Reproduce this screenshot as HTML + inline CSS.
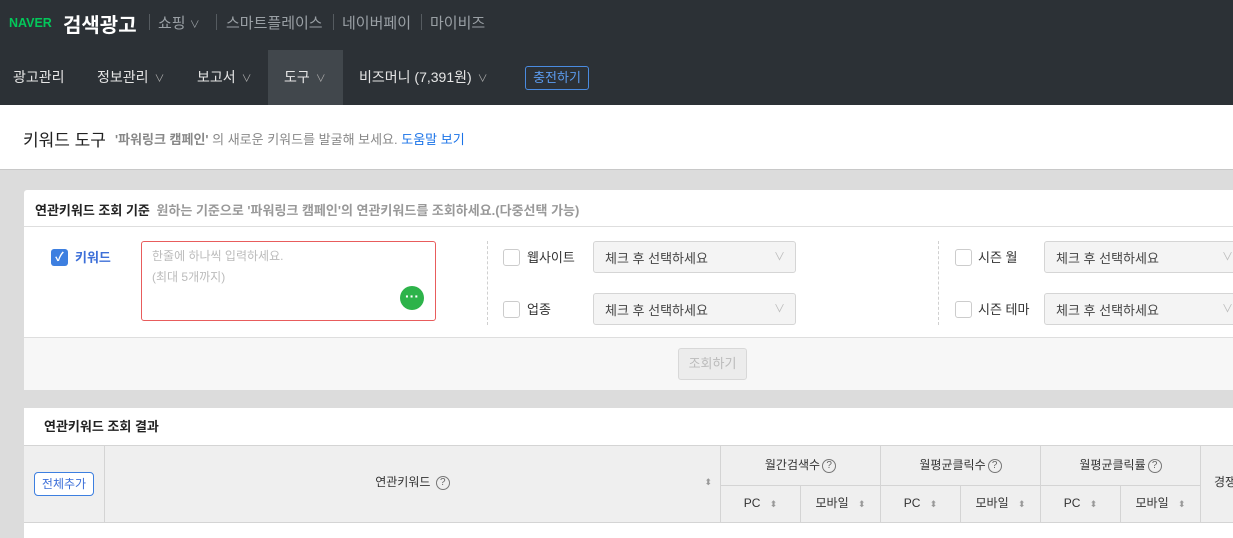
<!DOCTYPE html>
<html><head><meta charset="utf-8"><style>
*{margin:0;padding:0;box-sizing:border-box}
body{width:1233px;height:538px;overflow:hidden;background:#dcdcdc;font-family:"Liberation Sans","Noto Sans CJK KR",sans-serif;position:relative;font-size:13px;color:#333}
.a{position:absolute;white-space:nowrap}
.top{position:absolute;left:0;top:0;width:1233px;height:105px;background:#2c3136}
.g{color:#9aa0a5;font-size:15px}
.sep{position:absolute;width:1px;height:16px;background:#555b60;top:14px}
.nav{color:#e6e6e6;font-size:14px;top:67px}
.car{font-size:10px;color:#aaa;margin-left:6px}
.cb{position:absolute;width:17px;height:17px;border:1px solid #ccc;border-radius:3px;background:#fff}
.sel{position:absolute;height:32px;border:1px solid #d5d5d5;border-radius:3px;background:#f4f4f4;font-size:13px;color:#444;padding:6px 11px}
.sel:after{content:"∨";position:absolute;right:10px;top:6px;color:#bbb;font-size:11px}
.th{position:absolute;background:#efefef;border-right:1px solid #d4d4d4;border-bottom:1px solid #d4d4d4;font-size:12px;color:#333;text-align:center}
.q{display:inline-block;width:14px;height:14px;border:1px solid #777;border-radius:50%;font-size:10px;line-height:12px;text-align:center;color:#666;vertical-align:middle;margin-left:2px}
.s{color:#999;font-size:9px;margin-left:6px}
</style></head><body>
<div class="top"></div>
<div class="a" style="left:9px;top:16px;color:#03c75a;font-weight:bold;font-size:12.5px">NAVER</div>
<div class="a" style="left:63px;top:9px;color:#fff;font-size:20px;font-weight:bold">검색광고</div>
<div class="sep" style="left:149px"></div>
<div class="a g" style="left:158px;top:12px">쇼핑 <span style="font-size:10px">∨</span></div>
<div class="sep" style="left:216px"></div>
<div class="a g" style="left:226px;top:12px">스마트플레이스</div>
<div class="sep" style="left:333px"></div>
<div class="a g" style="left:342px;top:12px">네이버페이</div>
<div class="sep" style="left:421px"></div>
<div class="a g" style="left:430px;top:12px">마이비즈</div>
<div class="a" style="left:268px;top:50px;width:75px;height:55px;background:#41474c"></div>
<div class="a nav" style="left:13px">광고관리</div>
<div class="a nav" style="left:97px">정보관리<span class="car">∨</span></div>
<div class="a nav" style="left:197px">보고서<span class="car">∨</span></div>
<div class="a nav" style="left:284px">도구<span class="car">∨</span></div>
<div class="a nav" style="left:359px">비즈머니 (7,391원)<span class="car">∨</span></div>
<div class="a" style="left:525px;top:66px;width:64px;height:24px;border:1px solid #4a8be0;border-radius:3px;color:#5c9cf0;font-size:13px;text-align:center;line-height:22px">충전하기</div>

<div class="a" style="left:0;top:105px;width:1233px;height:65px;background:#fff;border-bottom:1px solid #c8c8c8"></div>
<div class="a" style="left:23px;top:126px;font-size:17px;color:#222">키워드 도구</div>
<div class="a" style="left:115px;top:129px;font-size:13px;color:#888"><b>'파워링크 캠페인'</b> 의 새로운 키워드를 발굴해 보세요. <span style="color:#1a73e8">도움말 보기</span></div>

<div class="a" style="left:24px;top:190px;width:1209px;height:200px;background:#fff;border-radius:3px 0 0 3px"></div>
<div class="a" style="left:24px;top:226px;width:1209px;height:1px;background:#dedede"></div>
<div class="a" style="left:35px;top:200px;font-size:13px;font-weight:bold;color:#222">연관키워드 조회 기준 <span style="color:#999;margin-left:3px">원하는 기준으로 '파워링크 캠페인'의 연관키워드를 조회하세요.(다중선택 가능)</span></div>
<div class="a" style="left:51px;top:249px;width:17px;height:17px;background:#3d7fe0;border-radius:3px;color:#fff;font-size:12px;text-align:center;line-height:17px;font-weight:bold">✓</div>
<div class="a" style="left:75px;top:247px;color:#3d6fd8;font-weight:bold;font-size:13px">키워드</div>
<div class="a" style="left:141px;top:241px;width:295px;height:80px;border:1px solid #e85c5c;border-radius:3px"></div>
<div class="a" style="left:152px;top:246px;color:#bbb;font-size:12px;line-height:21px">한줄에 하나씩 입력하세요.<br>(최대 5개까지)</div>
<div class="a" style="left:400px;top:286px;width:24px;height:24px;border-radius:50%;background:#2db34a;color:#fff;text-align:center;line-height:20px;font-size:14px;font-weight:bold">···</div>
<div class="a" style="left:487px;top:241px;height:84px;border-left:1px dashed #d0d0d0"></div>
<div class="a" style="left:938px;top:241px;height:84px;border-left:1px dashed #d0d0d0"></div>
<div class="cb" style="left:503px;top:249px"></div><div class="a" style="left:527px;top:247px">웹사이트</div>
<div class="cb" style="left:503px;top:301px"></div><div class="a" style="left:527px;top:299px">업종</div>
<div class="sel" style="left:593px;top:241px;width:203px">체크 후 선택하세요</div>
<div class="sel" style="left:593px;top:293px;width:203px">체크 후 선택하세요</div>
<div class="cb" style="left:955px;top:249px"></div><div class="a" style="left:978px;top:247px">시즌 월</div>
<div class="cb" style="left:955px;top:301px"></div><div class="a" style="left:978px;top:299px">시즌 테마</div>
<div class="sel" style="left:1044px;top:241px;width:200px">체크 후 선택하세요</div>
<div class="sel" style="left:1044px;top:293px;width:200px">체크 후 선택하세요</div>
<div class="a" style="left:24px;top:337px;width:1209px;height:53px;background:#f7f7f7;border-top:1px solid #dedede"></div>
<div class="a" style="left:678px;top:348px;width:69px;height:32px;border:1px solid #d8d8d8;border-radius:3px;background:#ececec;color:#bbb;text-align:center;line-height:30px">조회하기</div>

<div class="a" style="left:24px;top:408px;width:1209px;height:130px;background:#fff"></div>
<div class="a" style="left:44px;top:416px;font-size:13px;font-weight:bold;color:#222">연관키워드 조회 결과</div>
<div class="a" style="left:24px;top:445px;width:1209px;height:1px;background:#d4d4d4"></div>
<div class="th" style="left:24px;top:446px;width:81px;height:77px"></div>
<div class="a" style="left:34px;top:472px;width:60px;height:24px;border:1px solid #3d7fe0;border-radius:4px;color:#3d6fd8;font-size:12px;text-align:center;line-height:22px;background:#fff">전체추가</div>
<div class="th" style="left:105px;top:446px;width:616px;height:77px;line-height:73px">연관키워드 <span class="q">?</span><span class="s" style="position:absolute;right:8px;top:0">⬍</span></div>
<div class="th" style="left:721px;top:446px;width:160px;height:40px;line-height:38px">월간검색수<span class="q">?</span></div>
<div class="th" style="left:881px;top:446px;width:160px;height:40px;line-height:38px">월평균클릭수<span class="q">?</span></div>
<div class="th" style="left:1041px;top:446px;width:160px;height:40px;line-height:38px">월평균클릭률<span class="q">?</span></div>
<div class="th" style="left:1201px;top:446px;width:40px;height:77px;line-height:73px;text-align:left;padding-left:13px">경쟁</div>
<div class="th" style="left:721px;top:486px;width:80px;height:37px;line-height:35px">PC <span class="s">⬍</span></div>
<div class="th" style="left:801px;top:486px;width:80px;height:37px;line-height:35px">모바일 <span class="s">⬍</span></div>
<div class="th" style="left:881px;top:486px;width:80px;height:37px;line-height:35px">PC <span class="s">⬍</span></div>
<div class="th" style="left:961px;top:486px;width:80px;height:37px;line-height:35px">모바일 <span class="s">⬍</span></div>
<div class="th" style="left:1041px;top:486px;width:80px;height:37px;line-height:35px">PC <span class="s">⬍</span></div>
<div class="th" style="left:1121px;top:486px;width:80px;height:37px;line-height:35px">모바일 <span class="s">⬍</span></div>
</body></html>
